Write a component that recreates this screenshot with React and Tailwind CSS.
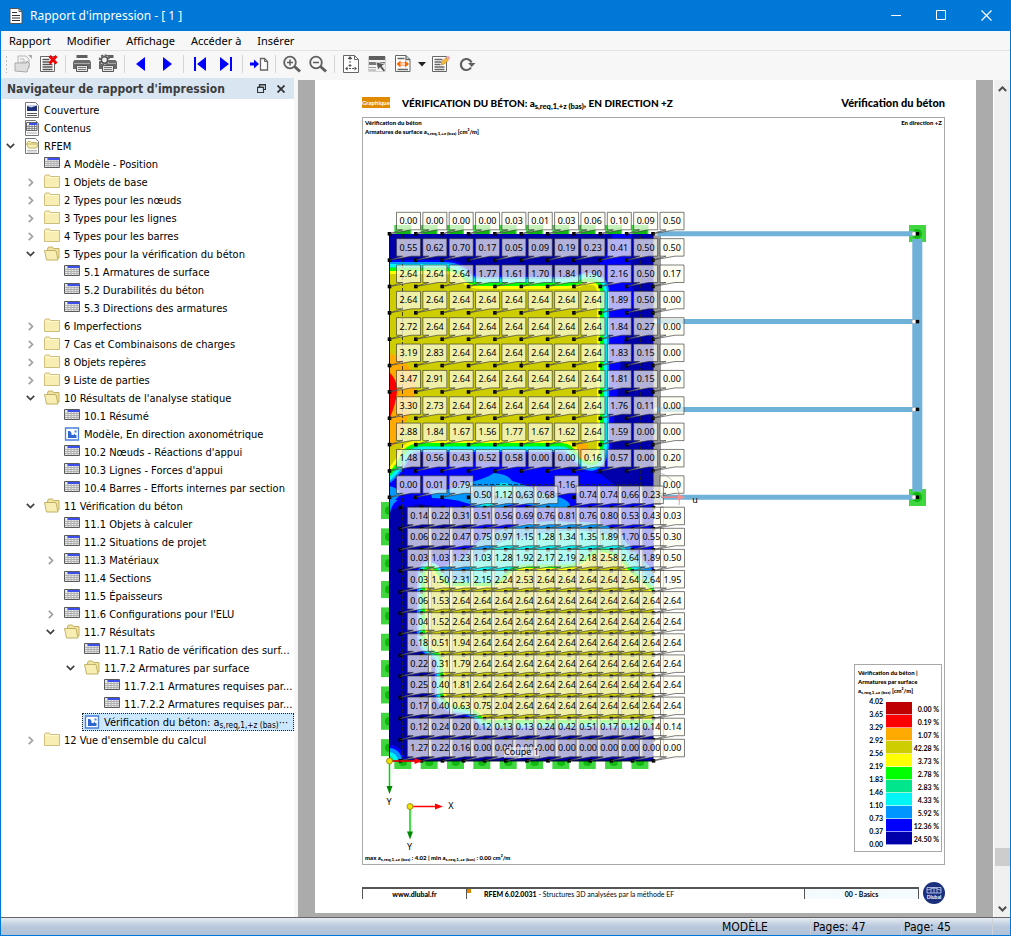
import { Fragment, useState } from 'react'

const menus = ['Rapport', 'Modifier', 'Affichage', 'Accéder à', 'Insérer']

const treeItems = [
  { level: 0, icon: 'cover', label: 'Couverture' },
  { level: 0, icon: 'contents', label: 'Contenus' },
  { level: 0, icon: 'rfem', label: 'RFEM', open: true },
  { level: 1, icon: 'table', label: 'A Modèle - Position' },
  { level: 1, icon: 'folder', label: '1 Objets de base', open: false },
  { level: 1, icon: 'folder', label: '2 Types pour les nœuds', open: false },
  { level: 1, icon: 'folder', label: '3 Types pour les lignes', open: false },
  { level: 1, icon: 'folder', label: '4 Types pour les barres', open: false },
  { level: 1, icon: 'folderOpen', label: '5 Types pour la vérification du béton', open: true },
  { level: 2, icon: 'table', label: '5.1 Armatures de surface' },
  { level: 2, icon: 'table', label: '5.2 Durabilités du béton' },
  { level: 2, icon: 'table', label: '5.3 Directions des armatures' },
  { level: 1, icon: 'folder', label: '6 Imperfections', open: false },
  { level: 1, icon: 'folder', label: '7 Cas et Combinaisons de charges', open: false },
  { level: 1, icon: 'folder', label: '8 Objets repères', open: false },
  { level: 1, icon: 'folder', label: '9 Liste de parties', open: false },
  { level: 1, icon: 'folderOpen', label: "10 Résultats de l'analyse statique", open: true },
  { level: 2, icon: 'table', label: '10.1 Résumé' },
  { level: 2, icon: 'picture', label: 'Modèle, En direction axonométrique' },
  { level: 2, icon: 'table', label: "10.2 Nœuds - Réactions d'appui" },
  { level: 2, icon: 'table', label: "10.3 Lignes - Forces d'appui" },
  { level: 2, icon: 'table', label: '10.4 Barres - Efforts internes par section' },
  { level: 1, icon: 'folderOpen', label: '11 Vérification du béton', open: true },
  { level: 2, icon: 'table', label: '11.1 Objets à calculer' },
  { level: 2, icon: 'table', label: '11.2 Situations de projet' },
  { level: 2, icon: 'table', label: '11.3 Matériaux', open: false },
  { level: 2, icon: 'table', label: '11.4 Sections' },
  { level: 2, icon: 'table', label: '11.5 Épaisseurs' },
  { level: 2, icon: 'table', label: "11.6 Configurations pour l'ELU", open: false },
  { level: 2, icon: 'folderOpen', label: '11.7 Résultats', open: true },
  { level: 3, icon: 'table', label: '11.7.1 Ratio de vérification des surf...' },
  { level: 3, icon: 'folderOpen', label: '11.7.2 Armatures par surface', open: true },
  { level: 4, icon: 'table', label: '11.7.2.1 Armatures requises par...' },
  { level: 4, icon: 'table', label: '11.7.2.2 Armatures requises par...' },
  { level: 3, icon: 'picture', label: 'Vérification du béton: a', sub: 's,req,1,+z (bas)', more: true },
  { level: 1, icon: 'folder', label: "12 Vue d'ensemble du calcul", open: false },
]

const indents = ['pl-0', 'pl-5', 'pl-10', 'pl-[60px]', 'pl-20']

// results per mesh node, one line per row of nodes
const upperRows = [
  '0.00 0.00 0.00 0.00 0.03 0.01 0.03 0.06 0.10 0.09 0.50',
  '0.55 0.62 0.70 0.17 0.05 0.09 0.19 0.23 0.41 0.50 0.50',
  '2.64 2.64 2.64 1.77 1.61 1.70 1.84 1.90 2.16 0.50 0.17',
  '2.64 2.64 2.64 2.64 2.64 2.64 2.64 2.64 1.89 0.50 0.00',
  '2.72 2.64 2.64 2.64 2.64 2.64 2.64 2.64 1.84 0.27 0.00',
  '3.19 2.83 2.64 2.64 2.64 2.64 2.64 2.64 1.83 0.15 0.00',
  '3.47 2.91 2.64 2.64 2.64 2.64 2.64 2.64 1.81 0.15 0.00',
  '3.30 2.73 2.64 2.64 2.64 2.64 2.64 2.64 1.76 0.11 0.00',
  '2.88 1.84 1.67 1.56 1.77 1.67 1.62 2.64 1.59 0.00 0.00',
  '1.48 0.56 0.43 0.52 0.58 0.00 0.00 0.16 0.57 0.00 0.20',
  '0.00 0.01 0.79 - - - 1.16 - - - 0.00',
]

const lowerRows = [
  '- - - 0.50 1.12 0.63 0.68 - 0.74 0.74 0.66 0.23 -',
  '0.14 0.22 0.31 0.51 0.56 0.69 0.76 0.81 0.76 0.80 0.53 0.43 0.03',
  '0.06 0.22 0.47 0.75 0.97 1.15 1.28 1.34 1.35 1.89 1.70 0.55 0.30',
  '0.03 1.03 1.23 1.03 1.28 1.92 2.17 2.19 2.18 2.58 2.64 1.89 0.50',
  '0.03 1.50 2.31 2.15 2.24 2.53 2.64 2.64 2.64 2.64 2.64 2.64 1.95',
  '0.06 1.53 2.64 2.64 2.64 2.64 2.64 2.64 2.64 2.64 2.64 2.64 2.64',
  '0.04 1.52 2.64 2.64 2.64 2.64 2.64 2.64 2.64 2.64 2.64 2.64 2.64',
  '0.18 0.51 1.94 2.64 2.64 2.64 2.64 2.64 2.64 2.64 2.64 2.64 2.64',
  '0.22 0.31 1.79 2.64 2.64 2.64 2.64 2.64 2.64 2.64 2.64 2.64 2.64',
  '0.25 0.40 1.81 2.64 2.64 2.64 2.64 2.64 2.64 2.64 2.64 2.64 2.64',
  '0.17 0.40 0.63 0.75 2.04 2.64 2.64 2.64 2.64 2.64 2.64 2.64 2.64',
  '0.12 0.24 0.20 0.12 0.13 0.13 0.24 0.42 0.51 0.17 0.12 0.14 0.14',
  '1.27 0.22 0.16 0.00 0.00 0.00 0.00 0.00 0.00 0.00 0.00 0.00 0.00',
]

const toNodes = (rows, x0, y0, step) =>
  rows.flatMap((row, j) =>
    row.split(' ').map((value, i) => ({ value, x: x0 + i * step, y: y0 + j * step }))
  )

const upperNodes = toNodes(upperRows, 389.5, 233.8, 26.35)
const lowerNodes = toNodes(lowerRows, 400.3, 507.6, 21.1)

const legendValues = ['4.02', '3.65', '3.29', '2.92', '2.56', '2.19', '1.83', '1.46', '1.10', '0.73', '0.37', '0.00']
const legendBands = [
  { color: 'bg-[#be0000]', share: '0.00 %' },
  { color: 'bg-[#ff0000]', share: '0.19 %' },
  { color: 'bg-[#ffaa00]', share: '1.07 %' },
  { color: 'bg-[#cdcd00]', share: '42.28 %' },
  { color: 'bg-[#ffff00]', share: '3.73 %' },
  { color: 'bg-[#00ff00]', share: '2.78 %' },
  { color: 'bg-[#00e68c]', share: '2.83 %' },
  { color: 'bg-[#00f5f5]', share: '4.33 %' },
  { color: 'bg-[#0096ff]', share: '5.92 %' },
  { color: 'bg-[#0000ff]', share: '12.36 %' },
  { color: 'bg-[#0000aa]', share: '24.50 %' },
]

export default function App() {
  return (
    <div className="flex h-screen flex-col overflow-hidden border-x border-b border-[#0078d7] bg-[#f7f7f7] font-['DejaVu_Sans_Condensed','DejaVu_Sans',sans-serif] text-[11px] text-black">
      <TitleBar />
      <nav className="flex h-5 shrink-0 items-center border-b border-[#e3e3e3]">
        {menus.map((menu) => (
          <button key={menu} className="px-2 font-['Noto_Sans',sans-serif] leading-4 hover:bg-[#cce8ff]">{menu}</button>
        ))}
      </nav>
      <Toolbar />
      <div className="flex min-h-0 flex-1">
        <Navigator />
        <Viewer />
      </div>
      <StatusBar />
    </div>
  )
}

function TitleBar() {
  return (
    <header className="flex h-[31px] shrink-0 items-center bg-[#0078d7] pl-[7px] text-white">
      <svg width="16" height="18" viewBox="0 0 16 18">
        <path d="M2 1.5h9l3 3v12H2z" fill="#fff" stroke="#555" />
        <path d="M11 1.5v3h3" fill="none" stroke="#555" />
        <path d="M4 5.5h5M4 8.5h8M4 11h8M4 13.5h8" stroke="#333" />
      </svg>
      <h1 className="flex-1 pl-[6px] font-['Noto_Sans',sans-serif] text-[12px]">Rapport d'impression - [ 1 ]</h1>
      <button aria-label="Réduire" className="flex h-full w-[46px] items-center justify-center">
        <svg width="11" height="11"><path d="M0 5.5h10" stroke="#fff" /></svg>
      </button>
      <button aria-label="Agrandir" className="flex h-full w-[44px] items-center justify-center">
        <svg width="11" height="11"><path d="M.5.5h9v9h-9z" fill="none" stroke="#fff" /></svg>
      </button>
      <button aria-label="Fermer" className="flex h-full w-[47px] items-center justify-center">
        <svg width="11" height="11"><path d="M.5.5l10 10M10.500.5l-10 10" stroke="#fff" strokeWidth="1.2" /></svg>
      </button>
    </header>
  )
}

function ToolButton({ label, children }) {
  return (
    <button aria-label={label} title={label} className="flex h-6 w-[26px] items-center justify-center hover:bg-[#cce8ff]">
      <svg width="20" height="20" viewBox="0 0 20 20">{children}</svg>
    </button>
  )
}

function Separator() {
  return <span className="mx-[3px] h-[18px] w-px bg-[#d4d4d4]" />
}

function Printer() {
  return (
    <>
      <path d="M4.500 1h11v3h-11z" fill="#5f5f5f" />
      <path d="M2.500 6h15l1.500 2v7H1V8z" fill="#6a6a6a" />
      <path d="M2 9.500h16" stroke="#a9a9a9" />
      <path d="M4.500 11.500h11v6h-11z" fill="#e4e4e4" stroke="#555" />
      <path d="M6 13.500h8M6 15.500h8" stroke="#777" />
    </>
  )
}

function Toolbar() {
  return (
    <div className="flex h-[29px] shrink-0 items-center pb-[3px] pl-px">
      <svg width="8" height="20"><path d="M4.500 2v17" stroke="#bbb" strokeWidth="1" strokeDasharray="2 2" /></svg>
      <ToolButton label="Ouvrir">
        <path d="M5 2h8l3 3v9H5z" fill="#f4f4f4" stroke="#b5b5b5" />
        <path d="M7 5h4v3M7 8h7" fill="none" stroke="#bbb" />
        <path d="M2 17V9h12v-2l2.500 3L14 18z" fill="#dedede" stroke="#aaa" />
        <path d="M15 1h4v4z" fill="#aaa" />
      </ToolButton>
      <ToolButton label="Supprimer le rapport">
        <path d="M1.500 2.500h14v15h-14z" fill="#fff" stroke="#666" />
        <path d="M3.500 5.500h7M3.500 8h7M3.500 10.500h10M3.500 13h10M3.500 15.500h10" stroke="#555" strokeWidth="1.300" />
        <path d="M10.500 2l7 7.500M17.500 2l-7 7.500" stroke="#f00000" strokeWidth="2.800" />
      </ToolButton>
      <Separator />
      <ToolButton label="Imprimer"><Printer /></ToolButton>
      <ToolButton label="Configurer l'impression">
        <Printer />
        <circle cx="6.500" cy="6" r="4.800" fill="#f2f2f2" stroke="#666" strokeWidth="2" strokeDasharray="2.200 1.500" />
        <circle cx="6.500" cy="6" r="3.200" fill="#f2f2f2" stroke="#555" strokeWidth="1.600" />
      </ToolButton>
      <Separator />
      <ToolButton label="Page précédente"><path d="M14 3v14L5 10z" fill="#0000ff" /></ToolButton>
      <ToolButton label="Page suivante"><path d="M6 3v14l9-7z" fill="#0000ff" /></ToolButton>
      <Separator />
      <ToolButton label="Première page"><path d="M4 3h2v14H4zM16 3v14l-9-7z" fill="#0000ff" /></ToolButton>
      <ToolButton label="Dernière page"><path d="M14 3h2v14h-2zM4 3v14l9-7z" fill="#0000ff" /></ToolButton>
      <Separator />
      <ToolButton label="Aller à la page">
        <path d="M1 8.500h4V5.500l5 4.500-5 4.500v-3H1z" fill="#0000ff" />
        <path d="M11.500 4.500h4l3 3v8.500h-7z" fill="#fff" stroke="#666" strokeWidth="1.300" />
        <path d="M15.500 4.500v3h3" fill="none" stroke="#666" />
      </ToolButton>
      <Separator />
      <ToolButton label="Zoom avant">
        <path d="M12.500 12.500l5.500 5" stroke="#5f5f5f" strokeWidth="3" />
        <circle cx="8" cy="8.500" r="5.800" fill="#f7f7f7" stroke="#5f5f5f" strokeWidth="1.800" />
        <path d="M5 8.500h6M8 5.500v6" stroke="#5f5f5f" strokeWidth="1.500" />
      </ToolButton>
      <ToolButton label="Zoom arrière">
        <path d="M12.500 12.500l5.500 5" stroke="#5f5f5f" strokeWidth="3" />
        <circle cx="8" cy="8.500" r="5.800" fill="#f7f7f7" stroke="#5f5f5f" strokeWidth="1.800" />
        <path d="M5 8.500h6" stroke="#5f5f5f" strokeWidth="1.500" />
      </ToolButton>
      <Separator />
      <ToolButton label="Page entière">
        <path d="M2.500 1.500h11l4 4v13h-15z" fill="#fff" stroke="#666" />
        <path d="M13.500 1.500v4h4" fill="none" stroke="#666" />
        <path d="M9 4v9M5 14.500h9" stroke="#555" strokeDasharray="2 1" />
        <path d="M9 2l2.500 3h-5zM4 14.500l2.500-2v4zM16 14.500l-2.500-2v4zM9 13l2-2H7z" fill="#555" />
      </ToolButton>
      <ToolButton label="Sélectionner">
        <path d="M1.500 2.500h17v15h-17z" fill="#f3f3f3" stroke="#d0d0d0" />
        <path d="M2 2h16v4H2z" fill="#5f5f5f" />
        <path d="M2 8h16v3H2z" fill="#777" />
        <path d="M2 13.500h7M2 16h7" stroke="#999" />
        <path d="M9 8l9 2-3 2 3.500 4.500-2 1.500-3.500-4.500-2 2.500z" fill="#555" stroke="#f3f3f3" strokeWidth=".8" />
      </ToolButton>
      <ToolButton label="Largeur de page">
        <path d="M2.500 1.500h10.500l4 4v12H2.500z" fill="#fff" stroke="#666" />
        <path d="M13 1.500v4h4M4.500 4.500h7M4.500 15.500h10.500" fill="none" stroke="#666" strokeWidth="1.300" />
        <path d="M3.500 10l4-3.500v2h4.500v-2l4 3.500-4 3.500v-2H7.500v2z" fill="#ff6600" />
        <path d="M7.500 10h4.500" stroke="#fff" strokeWidth="1.500" />
      </ToolButton>
      <button aria-label="Autres largeurs" className="flex h-6 w-3 items-center justify-center">
        <svg width="8" height="5"><path d="M0 0h8L4 4.500z" fill="#222" /></svg>
      </button>
      <ToolButton label="Modifier le rapport">
        <path d="M1.500 2.500h14v15h-14z" fill="#fff" stroke="#666" />
        <path d="M3.500 5.500h8M3.500 8h7M3.500 10.500h6M3.500 13h10M3.500 15.500h10" stroke="#666" strokeWidth="1.300" />
        <path d="M10 11l1-3.500 4-4 2.500 2.500-4 4z" fill="#f3b83c" stroke="#b98217" strokeWidth=".6" />
        <path d="M15 3.500l2-2 2.500 2.500-2 2z" fill="#eba6b5" />
      </ToolButton>
      <ToolButton label="Actualiser">
        <path d="M14 13.500a5.500 5.500 0 1 1 .5-5" fill="none" stroke="#5f5f5f" strokeWidth="2.200" />
        <path d="M11 9h7.500l-3.800 4z" fill="#5f5f5f" />
      </ToolButton>
    </div>
  )
}

function TreeIcon({ name }) {
  if (name === 'table') {
    return (
      <svg width="16" height="16" viewBox="0 0 16 16">
        <path d="M.5 1.500h15v10H.5z" fill="#e6e6e6" />
        <path d="M1 5.500h14M1 7.500h14M1 9.500h14M4 4v7.500M7 4v7.500M10 4v7.500M13 4v7.500" stroke="#a8a8a8" strokeWidth=".8" />
        <path d="M3.500 2H15v2H3.500z" fill="#3c50f0" />
        <path d="M.5 1.500h15v10H.5z" fill="none" stroke="#5a5a5a" />
      </svg>
    )
  }
  if (name === 'picture') {
    return (
      <svg width="16" height="16" viewBox="0 0 16 16">
        <path d="M1.500 2h13v12h-13z" fill="#fff" stroke="#4a7fdc" strokeWidth="1.300" />
        <path d="M4 5v7h8.500V9H11V7.500L9.500 9H7.500V7L6 5z" fill="#2f66cf" />
        <path d="M10.500 4.500h2v2h-2z" fill="#4a7fdc" />
      </svg>
    )
  }
  if (name === 'folder') {
    return (
      <svg width="16" height="16" viewBox="0 0 16 16">
        <path d="M.5 3V2.500l1-1.500h4l1 1.500h9v11H.5z" fill="#f8eeb4" stroke="#cdbf7c" />
        <path d="M1 3.500h14" stroke="#fff8d0" />
      </svg>
    )
  }
  if (name === 'folderOpen') {
    return (
      <svg width="16" height="16" viewBox="0 0 16 16">
        <path d="M3.500 3l1-2h4l1 1.500h5.500v9.500h-11z" fill="#f0e4a0" stroke="#c2b265" />
        <path d="M.5 4.500h11.500l2 9.500H2.500z" fill="#f8eeb4" stroke="#c2b265" />
      </svg>
    )
  }
  return (
    <svg width="16" height="16" viewBox="0 0 16 16">
      <path d="M1.500.5h10l3 3v12h-13z" fill="#fff" stroke="#777" />
      {name === 'cover' && (
        <>
          <path d="M3 3h10v6H3z" fill="#1d2f78" />
          <path d="M3 4l4 1.500 6-2V3H3z" fill="#c9d2ee" />
          <path d="M3 11.500h10M3 13.500h10" stroke="#555" />
        </>
      )}
      {name === 'contents' && (
        <>
          <path d="M2.500 2.500h10.500v8H2.500z" fill="#eee" stroke="#666" />
          <path d="M5 3h8v2H5z" fill="#3c50f0" />
          <path d="M3 6.500h10M3 8.500h10M5 5v5M8 5v5M10.500 5v5" stroke="#777" strokeWidth=".8" />
          <path d="M3 13h10" stroke="#aaa" />
        </>
      )}
      {name === 'rfem' && (
        <>
          <path d="M4 3.500h2.500l1 1h5L14 6l-1.500 4h-8L2.500 6z" fill="#f8eeb4" stroke="#c2b265" />
          <path d="M3 6h10" stroke="#c2b265" />
          <path d="M3 12.500h10M3 14h10" stroke="#aaa" strokeWidth=".8" />
        </>
      )}
    </svg>
  )
}

function Navigator() {
  const [selected, setSelected] = useState(34)

  return (
    <aside className="mr-1 flex w-[293px] shrink-0 flex-col bg-white">
      <div className="-mt-[2px] flex h-[21px] shrink-0 items-center bg-[#d9e6f2] pl-[6px] pr-2 text-[#3c3c3c]">
        <h2 className="flex-1 whitespace-nowrap text-[12px] font-bold leading-5">Navigateur de rapport d'impression</h2>
        <button aria-label="Détacher" className="flex w-[14px] justify-center">
          <svg width="9" height="9"><path d="M2.500 2.500v-2h6v5h-2M.5 3.500h6v5h-6zM.5 3h6M2.500 1h6" fill="none" stroke="#333" strokeWidth="1.200" /></svg>
        </button>
        <button aria-label="Fermer le navigateur" className="ml-2 flex w-[10px] justify-center">
          <svg width="8" height="8"><path d="M.5.5l7 7M7.500.5l-7 7" stroke="#333" strokeWidth="1.800" /></svg>
        </button>
      </div>
      <ul className="min-h-0 flex-1 overflow-hidden pt-[2px]">
        {treeItems.map((item, idx) => (
          <li key={idx} className={`flex h-[18px] items-center ${indents[item.level]}`}>
            <span className="flex w-[21px] shrink-0 justify-center pr-[2px]">
              {item.open !== undefined && (
                <button aria-label={item.open ? 'Réduire' : 'Développer'} className="flex h-4 w-4 items-center justify-center">
                  {item.open ? (
                    <svg width="9" height="6"><path d="M.8.800l3.700 3.700L8.200.8" fill="none" stroke="#404040" strokeWidth="1.700" /></svg>
                  ) : (
                    <svg width="6" height="9"><path d="M.800.8l3.700 3.700L.8 8.200" fill="none" stroke="#a0a0a0" strokeWidth="1.700" /></svg>
                  )}
                </button>
              )}
            </span>
            <button
              onClick={() => setSelected(idx)}
              className={`flex h-[18px] min-w-0 items-center border border-dotted pl-px ${
                selected === idx ? 'flex-1 border-[#222] bg-[#cce8ff]' : 'border-transparent'
              }`}
            >
              <span className="shrink-0"><TreeIcon name={item.icon} /></span>
              <span className="whitespace-nowrap pl-1 pt-px leading-[17px]">
                {item.label}
                {item.sub && <sub>{item.sub}</sub>}
                {item.more && '···'}
              </span>
            </button>
          </li>
        ))}
      </ul>
    </aside>
  )
}

function Viewer() {
  return (
    <div className="flex min-w-0 flex-1">
      <main className="min-w-0 flex-1 overflow-hidden bg-[#ababab] px-[17px] pb-1">
        <ReportPage />
      </main>
      <div className="flex w-[17px] shrink-0 flex-col items-center border-l border-white bg-[#f0f0f0]">
        <button aria-label="Défiler vers le haut" className="flex h-[17px] w-full items-center justify-center">
          <svg width="9" height="6"><path d="M.8 5l3.700-3.700L8.200 5" fill="none" stroke="#505050" strokeWidth="2" /></svg>
        </button>
        <div className="w-full flex-1" />
        <div className="h-[18px] w-[15px] bg-[#cdcdcd]" />
        <div className="h-[34px]" />
        <button aria-label="Défiler vers le bas" className="flex h-[17px] w-full items-center justify-center">
          <svg width="9" height="6"><path d="M.8.800l3.700 3.700L8.200.8" fill="none" stroke="#505050" strokeWidth="2" /></svg>
        </button>
      </div>
    </div>
  )
}

function ReportPage() {
  return (
    <article className="bg-white pb-2 pl-[47px] pr-[31px] pt-[15px] font-['Lato',sans-serif]">
      <div className="flex h-[22px] items-start">
        <span className="mt-[2px] flex h-[11px] w-7 items-center justify-center overflow-hidden bg-[#e08a00] text-[6px] font-bold leading-[11px] text-white">
          Graphique
        </span>
        <h3 className="flex-1 whitespace-nowrap pl-3 text-[10px] font-black leading-4">
          VÉRIFICATION DU BÉTON: a<sub>s,req,1,+z (bas)</sub>, EN DIRECTION +Z
        </h3>
        <p className="text-[11px] font-black leading-4">Vérification du béton</p>
      </div>
      <section className="relative border border-[#a8a8a8]">
        <div className="flex h-5 justify-between px-[2px] text-[6px] font-black leading-[9px]">
          <p>
            Vérification du béton
            <br />
            Armatures de surface a<sub>s,req,1,+z (bas)</sub> [cm²/m]
          </p>
          <p>En direction +Z</p>
        </div>
        <ReinforcementPlot />
        <p className="pb-[2px] pl-[2px] text-[6px] font-black leading-[9px]">
          max a<sub>s,req,1,+z (bas)</sub> : 4.02 | min a<sub>s,req,1,+z (bas)</sub> : 0.00 cm²/m
        </p>
        <Legend />
      </section>
      <footer className="mt-4 flex items-center text-[7px]">
        <div className="flex h-3 flex-1 border-r border-t-2 border-[#555] leading-[10px]">
          <a href="#dlubal" className="w-[104px] border-l border-[#555] text-center font-black">www.dlubal.fr</a>
          <div className="flex flex-1 border-l border-[#555]">
            <span className="h-1 w-1 bg-[#e08a00]" />
            <p className="whitespace-nowrap pl-[13px]"><b className="font-black">RFEM 6.02.0031</b> - Structures 3D analysées par la méthode EF</p>
          </div>
          <p className="w-[114px] border-l border-[#555] bg-[#f4fbff] text-center font-bold">00 - Basics</p>
        </div>
        <svg width="22" height="24" viewBox="0 0 22 24" className="ml-1">
          <circle cx="11" cy="12" r="11" fill="#1c2f7c" />
          <path d="M4 12V6.500h14V12M4 12h14M4 9c3 0 4-2 7-2s4 2 7 2M8 7.500V12M11 7v5M14 7.500V12" fill="none" stroke="#c8d4f4" strokeWidth=".8" />
          <text x="11" y="18" textAnchor="middle" fontSize="5" fontWeight="700" fill="#fff">Dlubal</text>
        </svg>
      </footer>
    </article>
  )
}

function Legend() {
  return (
    <div className="absolute bottom-3 right-[2px] w-[88px] border border-[#a8a8a8] bg-white pl-[3px] pr-[2px] pt-[3px] text-[6px] font-black leading-[9px]">
      <p className="whitespace-nowrap">
        Vérification du béton |
        <br />
        Armatures par surface
        <br />
        a<sub>s,req,1,+z (bas)</sub> [cm²/m]
      </p>
      <div className="flex items-center text-[7px] font-bold">
        <div className="flex-1 pr-[3px] text-right">
          {legendValues.map((value) => <p key={value} className="h-[13px] leading-[13px]">{value}</p>)}
        </div>
        <div className="w-[26px]">
          {legendBands.map((band) => <div key={band.share} className={`h-[13px] border-b border-white/60 ${band.color}`} />)}
        </div>
        <div className="w-[27px] text-right">
          {legendBands.map((band) => <p key={band.share} className="h-[13px] whitespace-nowrap leading-[15px]">{band.share}</p>)}
        </div>
      </div>
    </div>
  )
}

// wide strokes first, so each one shows as an iso band round the zone
function IsoBands({ d, bands }) {
  return bands.map(([color, width]) => (
    <path key={color} d={d} fill={color} stroke={color} strokeWidth={width * 2} strokeLinejoin="round" />
  ))
}

function ValueFlag({ x, y, value }) {
  const l = x + 7
  const t = y - 21.5
  return (
    <g>
      <path
        d={`M${l} ${t}h24v17.500h-9L${x} ${y}L${l + 6} ${t + 17.5}h-6z`}
        fill="#fffdf0"
        fillOpacity=".7"
        stroke="#333"
        strokeOpacity=".8"
        strokeWidth=".8"
      />
      <text x={x + 19} y={y - 9.5} textAnchor="middle" fontSize="9">{value}</text>
    </g>
  )
}

function Mesh({ nodes }) {
  return (
    <>
      {nodes.map((n, idx) => (
        <rect key={idx} x={n.x - 1.8} y={n.y - 1.8} width="3.600" height="3.600" />
      ))}
      {nodes.filter((n) => n.value !== '-').map((n, idx) => (
        <ValueFlag key={idx} {...n} />
      ))}
    </>
  )
}

function Axes({ x, y, children }) {
  return (
    <g>
      <path d={`M${x} ${y}h26`} stroke="#f00" strokeWidth="1.500" />
      <path d={`M${x + 25} ${y - 3}l8 3-8 3z`} fill="#f00" />
      <path d={`M${x} ${y}v26`} stroke="#00d800" strokeWidth="1.500" />
      <path d={`M${x - 3} ${y + 25}l3 8 3-8z`} fill="#008800" />
      <circle cx={x} cy={y} r="3" fill="#f0e000" stroke="#807000" strokeWidth=".7" />
      {children}
    </g>
  )
}

function ReinforcementPlot() {
  const supports = Array.from({ length: 10 }, (_, i) => i * 26.35)
  const upperZone = 'M380 274H444Q456 274 461 281Q467 289 482 289H560Q578 289 585 285H592Q598 286 597 296V445Q596 462 588 458L572 443Q566 439 552 440H420Q402 441 397 456Q394 464 380 476Z'
  const lowerZone = 'M660 600L640 583Q628 574 622 565Q606 548 592 558Q580 570 566 570H525Q512 571 505 582Q498 588 490 588H452Q441 588 437 578L432 571Q427 569 427 580V636Q428 646 438 650Q445 654 445 664V692Q446 703 462 704Q477 706 482 714Q486 719 496 718H660Z'

  return (
    <svg viewBox="363 138 581 715" className="h-auto w-full font-['Noto_Sans',sans-serif]">
      <defs>
        <clipPath id="slab"><rect x="389.500" y="234" width="264" height="527" /></clipPath>
      </defs>

      {/* supports */}
      <g fill="#3fd63f">
        {supports.map((d) => (
          <Fragment key={d}>
            <rect x={394.3 + d} y="225" width="17" height="9" />
            <rect x={394.3 + d} y="761" width="17" height="8" />
            <rect x="381" y={502 + d} width="9" height="17" />
          </Fragment>
        ))}
        <rect x="909" y="225" width="17" height="17" />
        <rect x="909" y="489" width="17" height="17" />
      </g>
      <g fill="#10b810">
        {supports.map((d) => (
          <Fragment key={d}>
            <path d={`M${396 + d} 234q7-7 14-6v6z`} />
            <ellipse cx={403 + d} cy="763" rx="4" ry="3" />
            <ellipse cx="388" cy={510.500 + d} rx="3" ry="4" />
          </Fragment>
        ))}
        <circle cx="917" cy="234" r="5" />
        <circle cx="917" cy="497" r="5" />
      </g>

      {/* beams and column line */}
      <rect x="653" y="234" width="8" height="271" fill="#9b9b9b" />
      <g stroke="#6fb1d9" strokeWidth="5">
        <path d="M657 233.800h256M657 321.600h256M657 409.400h256M657 497.200h256" />
        <path d="M917.300 239v252.500" strokeWidth="10" />
      </g>
      {[233.8, 321.6, 409.4, 497.2].map((y) => (
        <g key={y}>
          <circle cx="914" cy={y} r="2.200" fill="#fff" stroke="#999" strokeWidth=".6" />
          <circle cx="656" cy={y} r="2" fill="#ddd" />
          <rect x="915.800" y={y - 1.7} width="3.400" height="3.400" />
        </g>
      ))}

      {/* iso surfaces */}
      <g clipPath="url(#slab)">
        <rect x="389" y="234" width="265" height="528" fill="#0000aa" />
        <path d="M632 234Q628 260 634 300Q626 330 622 350L608 470H600V262Q612 250 612 234Z" fill="#0000ff" />
        <path d="M389 484L404 470 470 462 540 466 600 474 616 486 600 497 560 500 480 512 420 504 389 510Z" fill="#0000ff" />
        <path d="M430 490Q450 484 480 484Q492 471 510 474Q516 484 530 486L548 492Q560 500 600 490L640 490 654 500V522H500Q470 516 440 500Z" fill="#0000ff" />
        <path d="M398 500q-9 5-9 24v-24zM389 486q10 2 12 8l-12 12z" fill="#0096ff" />
        <path d="M430 489Q450 492 462 484Q484 480 494 473Q508 474 512 481Q530 486 544 494Q572 498 570 508H540Q520 500 500 508H478Q460 498 432 498Z" fill="#0096ff" />
        <path d="M495 486q9-6 16 0l8 5-14 7q-14-2-10-12zM480 506q8-8 14 0z" fill="#00f5f5" />
        <IsoBands d={lowerZone} bands={[['#0000ff', 12], ['#0096ff', 10]]} />
        <path d="M425 580Q426 562 446 552Q460 530 482 520Q505 508 530 512Q570 506 600 512Q634 514 654 530L660 570V600H445Z" fill="#0000ff" />
        <path d="M440 568Q466 558 470 550Q480 537 500 530Q540 518 570 522Q616 520 626 542L655 572V600H450Z" fill="#0096ff" />
        <path d="M488 550Q500 540 520 538Q560 528 590 532Q618 534 626 550L655 586V600H470V566Z" fill="#00f5f5" />
        <IsoBands
          d={upperZone}
          bands={[['#0000ff', 14], ['#0096ff', 12], ['#00f5f5', 10], ['#00e68c', 7], ['#00ff00', 6], ['#ffff00', 3], ['#cdcd00', 0]]}
        />
        <IsoBands
          d={lowerZone}
          bands={[['#00f5f5', 8], ['#00e68c', 6], ['#00ff00', 5], ['#ffff00', 2], ['#cdcd00', 0]]}
        />
        <path d="M389 353Q412 360 416 385Q414 406 405 424L394 446H389Z" fill="#ffaa00" />
        <path d="M389 372Q398 380 397 392Q396 404 389 420Z" fill="#f00" />
        <path d="M577 445q6-4 11 0l1 12q-6 6-10 0z" fill="#ffaa00" />
        <circle cx="389" cy="761" r="16" fill="#0000ff" />
        <circle cx="389" cy="761" r="13" fill="#0096ff" />
        <circle cx="389" cy="761" r="9" fill="#00f5f5" />
        <circle cx="389" cy="761" r="5" fill="#00e68c" />
      </g>
      <path d="M402.500 234V505M402.500 505V760M640.500 236V490M406 484.500H640M521 620v28M521.500 354v14" fill="none" stroke="#222" strokeWidth=".8" strokeDasharray="4 2" />
      <path d="M389.500 234V761H653.500" fill="none" stroke="#000" strokeWidth=".9" />

      <Mesh nodes={upperNodes} />
      <Mesh nodes={lowerNodes} />

      {/* local axis and section name */}
      <path d="M653 472A27 27 0 0 1 679 505" fill="none" stroke="#999" strokeWidth=".7" />
      <path d="M661 497.200h18" stroke="#f08080" strokeWidth="1.600" />
      <path d="M678 494l7 3.200-7 3.200z" fill="#f59090" />
      <text x="695" y="503" textAnchor="middle" fontSize="9">u</text>
      <rect x="504" y="747" width="35" height="11" fill="#fff" fillOpacity=".55" />
      <text x="521.500" y="755" textAnchor="middle" fontSize="9">Coupe 1</text>

      <Axes x={389.5} y={761}>
        <text x="389" y="805" textAnchor="middle" fontSize="9">Y</text>
      </Axes>
      <Axes x={410} y={806.5}>
        <text x="451" y="809" textAnchor="middle" fontSize="9">X</text>
        <text x="409.500" y="850" textAnchor="middle" fontSize="9">Y</text>
      </Axes>
    </svg>
  )
}

function StatusBar() {
  return (
    <footer className="flex h-[18px] shrink-0 items-center border-t border-[#666] bg-gradient-to-b from-[#e6ebf2] via-[#b9c8dc] to-[#b0c2da] text-[12px] leading-4">
      <div className="flex-1" />
      <p className="w-[88px]">MODÈLE</p>
      <p className="w-[91px] border-l border-[#cfd3d8] pl-[2px]">Pages: 47</p>
      <p className="w-[91px] border-l border-[#cfd3d8] pl-[2px]">Page: 45</p>
      <span className="h-4 w-[18px] border-l border-[#cfd3d8]" />
    </footer>
  )
}
